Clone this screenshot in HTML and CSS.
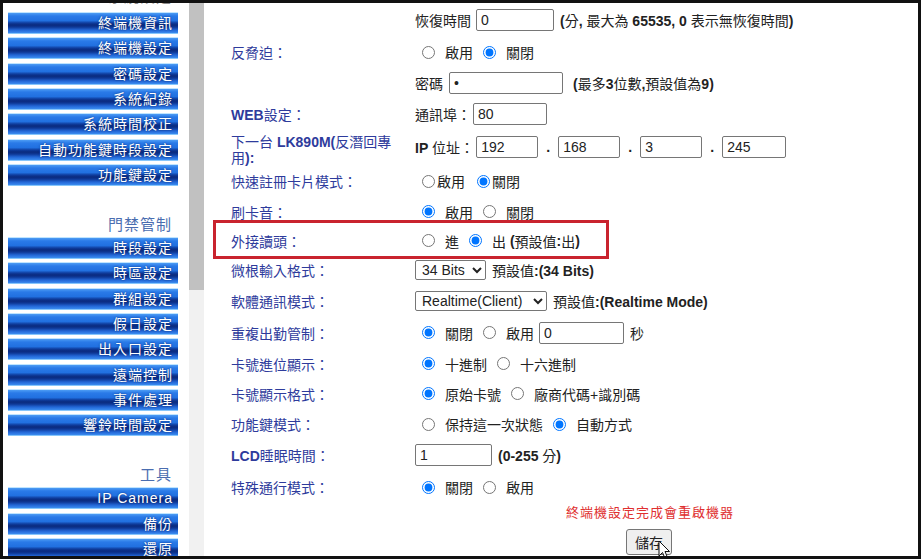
FILE: index.html
```html
<!DOCTYPE html>
<html>

<head>
    <meta charset="utf-8">
    <title>終端機設定</title>
    <link rel="stylesheet" href="styles.css">
</head>

<body>
    <div class="frame">
        <aside class="side">
            <div class="menu-title first">系統設定</div>
            <a class="menu-btn" href="#">終端機資訊</a>
            <a class="menu-btn" href="#">終端機設定</a>
            <a class="menu-btn" href="#">密碼設定</a>
            <a class="menu-btn" href="#">系統紀錄</a>
            <a class="menu-btn" href="#">系統時間校正</a>
            <a class="menu-btn" href="#">自動功能鍵時段設定</a>
            <a class="menu-btn" href="#">功能鍵設定</a>

            <div class="menu-title">門禁管制</div>
            <a class="menu-btn" href="#">時段設定</a>
            <a class="menu-btn" href="#">時區設定</a>
            <a class="menu-btn" href="#">群組設定</a>
            <a class="menu-btn" href="#">假日設定</a>
            <a class="menu-btn" href="#">出入口設定</a>
            <a class="menu-btn" href="#">遠端控制</a>
            <a class="menu-btn" href="#">事件處理</a>
            <a class="menu-btn" href="#">響鈴時間設定</a>

            <div class="menu-title">工具</div>
            <a class="menu-btn" href="#">IP Camera</a>
            <a class="menu-btn" href="#">備份</a>
            <a class="menu-btn" href="#">還原</a>
        </aside>

        <div class="scroll">
            <div class="thumb"></div>
        </div>

        <main class="content">
            <div class="form">
                <div class="row">
                    <div class="label"></div>
                    <div class="value">
                        <span>恢復時間</span>
                        <input class="field gap-s" type="text" value="0" style="width: 78px">
                        <span class="note"><b>(</b>分<b>, </b>最大為 <b>65535, 0</b> 表示無恢復時間<b>)</b></span>
                    </div>
                </div>

                <div class="row">
                    <div class="label">反脅迫：</div>
                    <div class="value">
                        <label class="opt"><input type="radio" name="duress">啟用</label>
                        <label class="opt"><input type="radio" name="duress" checked>關閉</label>
                    </div>
                </div>

                <div class="row">
                    <div class="label"></div>
                    <div class="value">
                        <span>密碼</span>
                        <input class="field gap-m" type="password" value="9" style="width: 114px">
                        <span class="note wide"><b>(</b>最多<b>3</b>位數<b>,</b>預設值為<b>9)</b></span>
                    </div>
                </div>

                <div class="row">
                    <div class="label"><b>WEB</b>設定：</div>
                    <div class="value">
                        <span>通訊埠：</span>
                        <input class="field gap-xs" type="text" value="80" style="width: 74px">
                    </div>
                </div>

                <div class="row">
                    <div class="label two-line">下一台 <b>LK890M(</b>反潛回專<br>用<b>):</b></div>
                    <div class="value">
                        <span><b>IP</b> 位址：</span>
                        <input class="field gap-xs" type="text" value="192" style="width: 62px">
                        <span class="dot">.</span>
                        <input class="field" type="text" value="168" style="width: 62px">
                        <span class="dot">.</span>
                        <input class="field" type="text" value="3" style="width: 62px">
                        <span class="dot">.</span>
                        <input class="field" type="text" value="245" style="width: 64px">
                    </div>
                </div>

                <div class="row">
                    <div class="label">快速註冊卡片模式：</div>
                    <div class="value tight">
                        <label class="opt"><input type="radio" name="quick">啟用</label>
                        <label class="opt"><input type="radio" name="quick" checked>關閉</label>
                    </div>
                </div>

                <div class="row">
                    <div class="label">刷卡音：</div>
                    <div class="value">
                        <label class="opt"><input type="radio" name="beep" checked>啟用</label>
                        <label class="opt"><input type="radio" name="beep">關閉</label>
                    </div>
                </div>

                <div class="row mark">
                    <div class="label">外接讀頭：</div>
                    <div class="value">
                        <label class="opt"><input type="radio" name="reader">進</label>
                        <label class="opt"><input type="radio" name="reader" checked>出&nbsp;<b>(</b>預設值<b>:</b>出<b>)</b></label>
                    </div>
                </div>

                <div class="row">
                    <div class="label">微根輸入格式：</div>
                    <div class="value">
                        <select class="pick" style="width: 71px">
                            <option>34 Bits</option>
                        </select>
                        <span class="hint">預設值<b>:(34 Bits)</b></span>
                    </div>
                </div>

                <div class="row">
                    <div class="label">軟體通訊模式：</div>
                    <div class="value">
                        <select class="pick" style="width: 132px">
                            <option>Realtime(Client)</option>
                        </select>
                        <span class="hint">預設值<b>:(Realtime Mode)</b></span>
                    </div>
                </div>

                <div class="row">
                    <div class="label">重複出勤管制：</div>
                    <div class="value">
                        <label class="opt"><input type="radio" name="repeat" checked>關閉</label>
                        <label class="opt"><input type="radio" name="repeat">啟用</label>
                        <input class="field gap-s" type="text" value="0" style="width: 85px">
                        <span class="hint">秒</span>
                    </div>
                </div>

                <div class="row">
                    <div class="label">卡號進位顯示：</div>
                    <div class="value">
                        <label class="opt"><input type="radio" name="radix" checked>十進制</label>
                        <label class="opt"><input type="radio" name="radix">十六進制</label>
                    </div>
                </div>

                <div class="row">
                    <div class="label">卡號顯示格式：</div>
                    <div class="value">
                        <label class="opt"><input type="radio" name="cardfmt" checked>原始卡號</label>
                        <label class="opt"><input type="radio" name="cardfmt">廠商代碼+識別碼</label>
                    </div>
                </div>

                <div class="row">
                    <div class="label">功能鍵模式：</div>
                    <div class="value">
                        <label class="opt"><input type="radio" name="fkey">保持這一次狀態</label>
                        <label class="opt"><input type="radio" name="fkey" checked>自動方式</label>
                    </div>
                </div>

                <div class="row">
                    <div class="label"><b>LCD</b>睡眠時間：</div>
                    <div class="value">
                        <input class="field" type="text" value="1" style="width: 77px">
                        <span class="hint"><b>(0-255</b> 分<b>)</b></span>
                    </div>
                </div>

                <div class="row">
                    <div class="label">特殊通行模式：</div>
                    <div class="value">
                        <label class="opt"><input type="radio" name="special" checked>關閉</label>
                        <label class="opt"><input type="radio" name="special">啟用</label>
                    </div>
                </div>
            </div>

            <p class="warn">終端機設定完成會重啟機器</p>

            <div class="actions">
                <button class="save">儲存</button>
                <svg class="cursor" width="13" height="20" viewBox="0 0 13 20">
                    <path d="M1 1 L1 16 L4.5 12.5 L7 18.5 L9.5 17.5 L7 11.5 L11.5 11.5 Z" fill="#fff" stroke="#111" stroke-width="1" stroke-linejoin="round" />
                </svg>
            </div>
        </main>
    </div>
</body>

</html>
```

FILE: styles.css
```css
body {
    margin: 0;
    background: #fff;
    font-family: "Liberation Sans", "Noto Sans CJK TC", sans-serif;
}

.frame {
    width: 921px;
    height: 559px;
    box-sizing: border-box;
    border: 3px solid #111;
    display: flex;
    overflow: hidden;
    background: #fff;
}

/* left menu frame, scrolled down a little */
.side {
    width: 186px;
    flex: none;
    padding-left: 5px;
    box-sizing: border-box;
    overflow: hidden;
}

.menu-title {
    width: 170px;
    margin: 30px 0 3px;
    padding-right: 6px;
    box-sizing: border-box;
    text-align: right;
    font-size: 15px;
    line-height: 18px;
    letter-spacing: 1px;
    color: #4a6db0;
}

.menu-title.first {
    margin-top: -15px;
    margin-bottom: 6px;
    color: #8a8a8a;
}

.menu-btn {
    display: block;
    width: 170px;
    height: 22px;
    margin-bottom: 3.33px;
    padding-right: 5px;
    box-sizing: border-box;
    border-top: 1px solid #bfe4ff;
    border-bottom: 1px solid #86c6fb;
    background: linear-gradient(to bottom,
            #4d9cf4 0%,
            #2a7ae8 15%,
            #2170e0 38%,
            #0f3c9c 50%,
            #0a2a7e 60%,
            #0e3794 70%,
            #2266d6 85%,
            #3b8cf0 100%);
    color: #fff;
    text-align: right;
    text-decoration: none;
    font-size: 14px;
    line-height: 20px;
    letter-spacing: 1px;
    text-shadow: 0 0 2px #0a2a70;
}

/* scrollbar of the menu frame */
.scroll {
    width: 15px;
    flex: none;
    background: #f1f1f1;
}

.thumb {
    height: 287px;
    background: #c1c1c1;
}

/* settings form */
.content {
    flex: 1;
    padding: 1px 0 0 27px;
    font-size: 14px;
    color: #222;
}

.form {
    display: grid;
    grid-template-rows: 32.5px 31.5px 29.5px 32px 35.5px 32px 29px 29.5px 29.5px 31.5px 32px 30px 30px 31px 31.5px 32px;
}

.row {
    display: flex;
    align-items: center;
}

.label {
    width: 184px;
    flex: none;
    color: #2e3b9c;
}

.two-line {
    line-height: 16px;
    padding-top: 5px;
}

.value {
    display: flex;
    align-items: center;
    white-space: nowrap;
}

.opt {
    display: inline-flex;
    align-items: center;
}

.opt input {
    width: 13px;
    height: 13px;
    margin: 0 10px 0 7px;
}

.opt + .opt {
    margin-left: 3px;
}

.tight .opt input {
    margin-right: 2px;
}

.tight .opt + .opt {
    margin-left: 5px;
}

.field {
    height: 22px;
    box-sizing: border-box;
    border: 1px solid #767676;
    border-radius: 2px;
    padding: 0 4px;
    font-family: "Liberation Sans", sans-serif;
    font-size: 14px;
    color: #222;
    background: #fff;
}

.gap-xs {
    margin-left: 2px;
}

.gap-s {
    margin-left: 5px;
}

.gap-m {
    margin-left: 6px;
}

.note {
    margin-left: 6px;
}

.note.wide {
    margin-left: 10px;
}

.dot {
    width: 20px;
    text-align: center;
    font-weight: bold;
}

.pick {
    height: 20px;
    box-sizing: border-box;
    border: 1px solid #767676;
    border-radius: 2px;
    padding: 0 0 0 2px;
    font-family: "Liberation Sans", sans-serif;
    font-size: 14px;
    color: #222;
    background: #fff;
}

.hint {
    margin-left: 6px;
}

/* annotation box around the reader row */
.mark {
    position: relative;
}

.mark::after {
    content: "";
    position: absolute;
    left: -18px;
    top: -6px;
    width: 396px;
    height: 39px;
    box-sizing: border-box;
    border: 3px solid #c9232e;
}

.warn {
    margin: 0 0 0 335px;
    line-height: 20px;
    font-size: 13px;
    letter-spacing: 1px;
    color: #e03030;
}

.actions {
    position: relative;
    margin: 6px 0 0 395px;
}

.save {
    width: 46px;
    height: 26px;
    padding: 0;
    border: 1px solid #767676;
    border-radius: 3px;
    background: #efefef;
    font-family: "Liberation Sans", "Noto Sans CJK TC", sans-serif;
    font-size: 14px;
    color: #222;
}

.cursor {
    position: absolute;
    left: 32px;
    top: 11px;
}
```
